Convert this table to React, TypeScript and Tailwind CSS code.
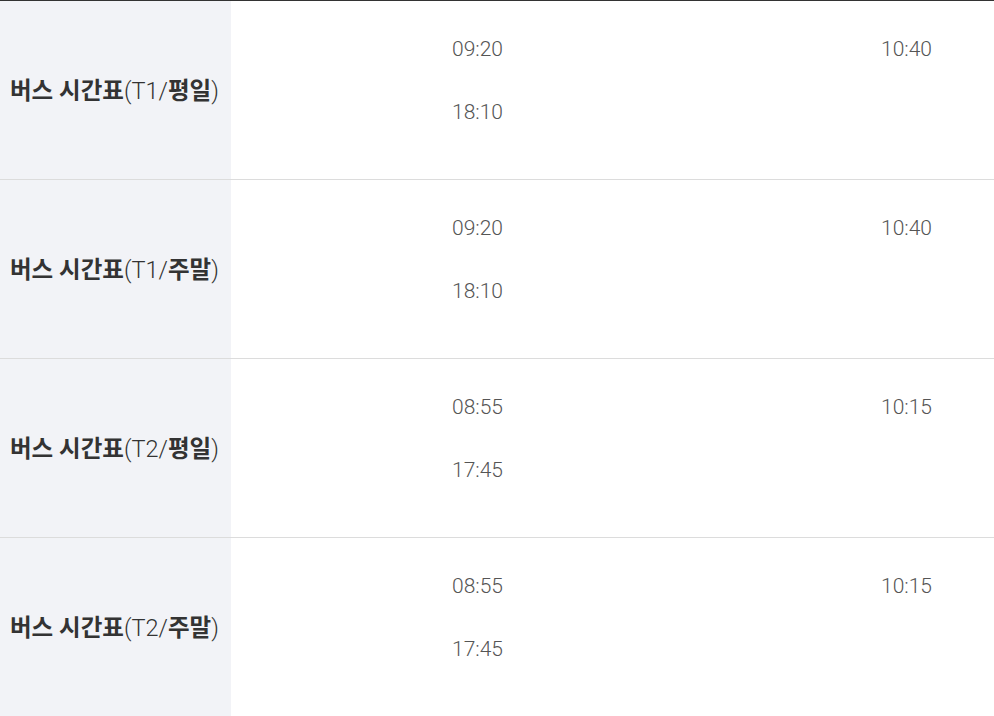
const rows = [
  { code: "T1", day: "평일", times: ["09:20", "10:40", "18:10"] },
  { code: "T1", day: "주말", times: ["09:20", "10:40", "18:10"] },
  { code: "T2", day: "평일", times: ["08:55", "10:15", "17:45"] },
  { code: "T2", day: "주말", times: ["08:55", "10:15", "17:45"] },
];

export default function App() {
  return (
    <div
      className="w-[994px] h-[716px] overflow-hidden bg-white border-t border-[#333]"
      style={{ fontFamily: "Roboto, 'Noto Sans CJK KR', sans-serif" }}
    >
      {rows.map((row, i) => (
        <div
          key={`row-${i}`}
          className={`flex h-[179px] ${i < rows.length - 1 ? "border-b border-[#dcdcdc]" : ""}`}
        >
          <div className="w-[231px] shrink-0 bg-[#f2f3f7] flex items-center pl-[10px] pt-[3px] text-[23.5px] text-[#333] whitespace-nowrap">
            <span className="font-semibold">버스 시간표</span>
            <span className="font-light">({row.code}/</span>
            <span className="font-semibold">{row.day}</span>
            <span className="font-light">)</span>
          </div>
          <div className="grid grid-cols-[429px_429px] content-start pl-[221px] pt-[17px] text-[21px] font-light text-[#555]">
            {row.times.map((t, j) => (
              <div key={`t-${i}-${j}`} className="h-[63px] flex items-center">
                {t}
              </div>
            ))}
          </div>
        </div>
      ))}
    </div>
  );
}
